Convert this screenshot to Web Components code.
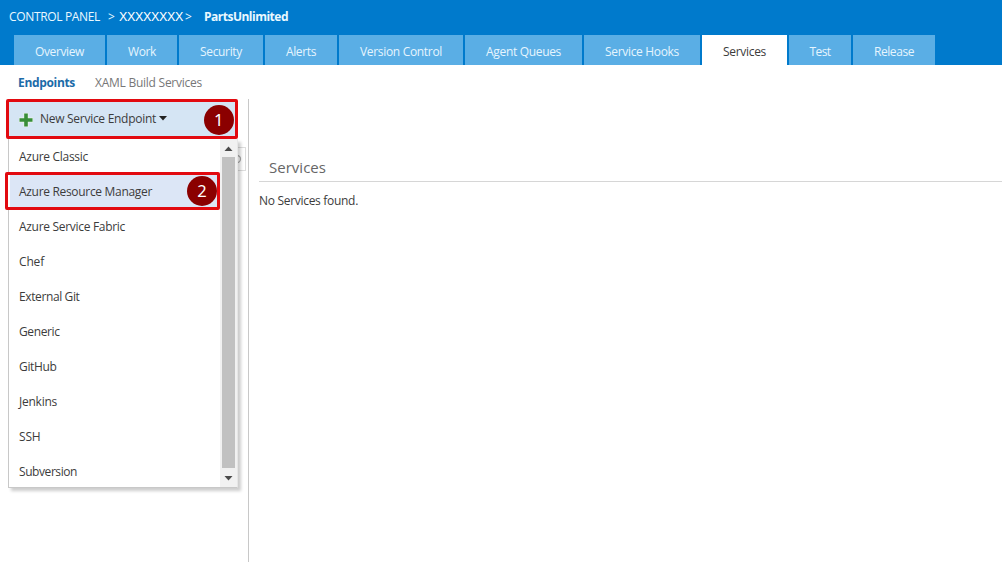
<!DOCTYPE html>
<html lang="en">
<head>
<meta charset="utf-8">
<title>Services</title>
<style>
html,body{margin:0;height:100%;overflow:hidden;background:#fff;font-family:"Open Sans","Noto Sans",sans-serif;font-size:12px;color:#3c3c3c}
</style>
</head>
<body>
<admin-page></admin-page>
<script>
const define = (name, html, after) => {
  const t = document.createElement('template');
  t.innerHTML = html;
  customElements.define(name, class extends HTMLElement {
    connectedCallback() {
      if (this.shadowRoot) return;
      this.attachShadow({mode: 'open'}).append(t.content.cloneNode(true));
      if (after) after(this, this.shadowRoot);
    }
  });
};

// A single line label whose tracking is adjusted to a given width.
define('fit-text', `<style>:host{display:inline-block;white-space:pre;line-height:18px;flex:none}span{display:inline-block}</style><span><slot></slot></span>`,
  (el, root) => {
    const w = +el.getAttribute('w');
    const s = root.querySelector('span');
    const n = el.textContent.length;
    const nat = s.getBoundingClientRect().width;
    s.style.letterSpacing = ((w - nat) / n) + 'px';
    el.style.width = w + 'px';
  });

define('bread-crumb', `<style>
:host{display:flex;height:35px;box-sizing:border-box;padding:8px 0 0 9px;color:#e9f8ff;align-items:flex-start}
.s{margin-left:8px}.x{margin-left:5px;font-family:"Liberation Sans",sans-serif;font-size:12.5px;color:#fff}.g{margin-left:2px}.b{margin-left:13px;font-weight:700}
</style><fit-text w="91">CONTROL PANEL</fit-text><fit-text class="s" w="6">&gt;</fit-text><fit-text class="x" w="64">XXXXXXXX</fit-text><fit-text class="g" w="6">&gt;</fit-text><fit-text class="b" w="84">PartsUnlimited</fit-text>`);

define('hub-tab', `<style>
:host{display:flex;justify-content:center;height:30px;box-sizing:border-box;padding-top:8px;background:#5aaee5;color:#e6f5fe;flex:none}
:host([active]){background:#fff;color:#3c3c3c}
</style><slot></slot>`, el => { el.style.width = el.getAttribute('size') + 'px'; });

define('hub-header', `<style>
:host{display:block;height:65px;background:#007acc}
nav{display:flex;gap:2px;padding-left:14px}
</style><bread-crumb></bread-crumb><nav>
<hub-tab size="91"><fit-text w="49">Overview</fit-text></hub-tab>
<hub-tab size="70"><fit-text w="28">Work</fit-text></hub-tab>
<hub-tab size="84"><fit-text w="42">Security</fit-text></hub-tab>
<hub-tab size="72"><fit-text w="30">Alerts</fit-text></hub-tab>
<hub-tab size="124"><fit-text w="82">Version Control</fit-text></hub-tab>
<hub-tab size="117"><fit-text w="75">Agent Queues</fit-text></hub-tab>
<hub-tab size="116"><fit-text w="74">Service Hooks</fit-text></hub-tab>
<hub-tab size="85" active><fit-text w="43">Services</fit-text></hub-tab>
<hub-tab size="62"><fit-text w="21">Test</fit-text></hub-tab>
<hub-tab size="82"><fit-text w="40">Release</fit-text></hub-tab>
</nav>`);

define('sub-nav', `<style>
:host{display:flex;height:34px;box-sizing:border-box;padding:9px 0 0 18px;gap:20px;color:#777}
.on{font-weight:700;color:#1c6ba8}
</style><fit-text class="on" w="57">Endpoints</fit-text><fit-text w="107">XAML Build Services</fit-text>`);

define('step-badge', `<style>
:host{position:absolute;width:30px;height:30px;border-radius:50%;background:#8b0000;color:#fff;font:16.5px/30px "Noto Sans",sans-serif;text-align:center}
</style><slot></slot>`);

define('new-button', `<style>
:host{position:relative;display:flex;align-items:flex-start;width:232px;height:40px;box-sizing:border-box;margin-left:6px;border:3px solid #e20a10;border-radius:2px;background:#d5e5f4;padding:8px 0 0 10px;z-index:3}
svg{flex:none}.p{margin-top:3px}.t{margin-left:7px}.c{margin:6px 0 0 2.5px}
step-badge{left:194.7px;top:3.3px}
</style><svg class="p" width="14" height="14" viewBox="0 0 14 14"><path d="M4.5 0H9.5V4.5H14V9.5H9.5V14H4.5V9.5H0V4.5H4.5Z" fill="#e9f4e9"/><path d="M5.2 .5H8.8V5.2H13.5V8.8H8.8V13.5H5.2V8.8H.5V5.2H5.2Z" fill="#388e38"/></svg><fit-text class="t" w="116">New Service Endpoint</fit-text><svg class="c" width="8" height="5" viewBox="0 0 8 5"><path d="M0 0H8L4 4.5Z" fill="#222"/></svg><step-badge>1</step-badge>`);

define('menu-item', `<style>
:host{display:block;position:relative;height:35px;box-sizing:border-box;padding:9px 0 0 10px}
:host([picked])::before{content:"";position:absolute;left:-4px;top:-2px;width:215px;height:38px;box-sizing:border-box;border:3px solid #e20a10;border-radius:2px;background:linear-gradient(90deg,#fff 2px,#dce6f6 2px)}
::slotted(fit-text){position:relative}
step-badge{left:178px;top:2px}
</style><slot></slot>`, (el, root) => {
  if (el.hasAttribute('picked')) { const b = document.createElement('step-badge'); b.textContent = '2'; root.append(b); }
});

define('scroll-bar', `<style>
:host{display:flex;flex-direction:column;align-items:center;width:17px;background:#f1f1f1}
i{flex:1;width:13px;background:#c1c1c1}svg{display:block;flex:none}
</style><svg width="17" height="18"><path d="M4.5 12L8.5 7.5L12.5 12Z" fill="#4a4a4a"/></svg><i></i><svg width="17" height="19"><path d="M4.5 8L8.5 12.5L12.5 8Z" fill="#4a4a4a"/></svg>`);

define('endpoint-menu', `<style>
:host{position:relative;z-index:2;display:flex;width:230px;height:349px;box-sizing:border-box;margin-left:8px;border:solid #c8c8c8;border-width:0 1px 1px;border-right-color:#e6e6e6;background:#fff;box-shadow:3px 3px 3px rgba(0,0,0,.2)}
.l{flex:1;min-width:0}
</style><div class="l">
<menu-item><fit-text w="69">Azure Classic</fit-text></menu-item>
<menu-item picked><fit-text w="133">Azure Resource Manager</fit-text></menu-item>
<menu-item><fit-text w="106">Azure Service Fabric</fit-text></menu-item>
<menu-item><fit-text w="25">Chef</fit-text></menu-item>
<menu-item><fit-text w="60.5">External Git</fit-text></menu-item>
<menu-item><fit-text w="40.5">Generic</fit-text></menu-item>
<menu-item><fit-text w="37.5">GitHub</fit-text></menu-item>
<menu-item><fit-text w="38">Jenkins</fit-text></menu-item>
<menu-item><fit-text w="21.5">SSH</fit-text></menu-item>
<menu-item><fit-text w="58">Subversion</fit-text></menu-item>
</div><scroll-bar></scroll-bar>`);

define('side-panel', `<style>
:host{display:block;position:relative;width:249px;box-sizing:border-box;border-right:1px solid #c8c8c8}
.search{position:absolute;left:200px;top:48px;width:46px;height:24px;box-sizing:border-box;border:1px solid #ddd}
.search svg{position:absolute;right:3px;top:6px}
</style><div class="search"><svg width="11" height="11"><circle cx="6" cy="5" r="3.5" fill="none" stroke="#aaa" stroke-width="1.3"/></svg></div><new-button></new-button><endpoint-menu></endpoint-menu>`);

define('services-pane', `<style>
:host{display:block;flex:1;padding-left:10px}
h1{margin:0;font-size:15px;font-weight:400;height:83px;box-sizing:border-box;padding:58px 0 0 10px;border-bottom:1px solid #d6d6d6;color:#666}
p{margin:10px 0 0}
</style><h1><fit-text w="57">Services</fit-text></h1><p><fit-text w="99">No Services found.</fit-text></p>`);

define('admin-page', `<style>
:host{display:flex;flex-direction:column;height:562px}
main{display:flex;flex:1;min-height:0}
</style><hub-header></hub-header><sub-nav></sub-nav><main><side-panel></side-panel><services-pane></services-pane></main>`);
</script>
</body>
</html>
